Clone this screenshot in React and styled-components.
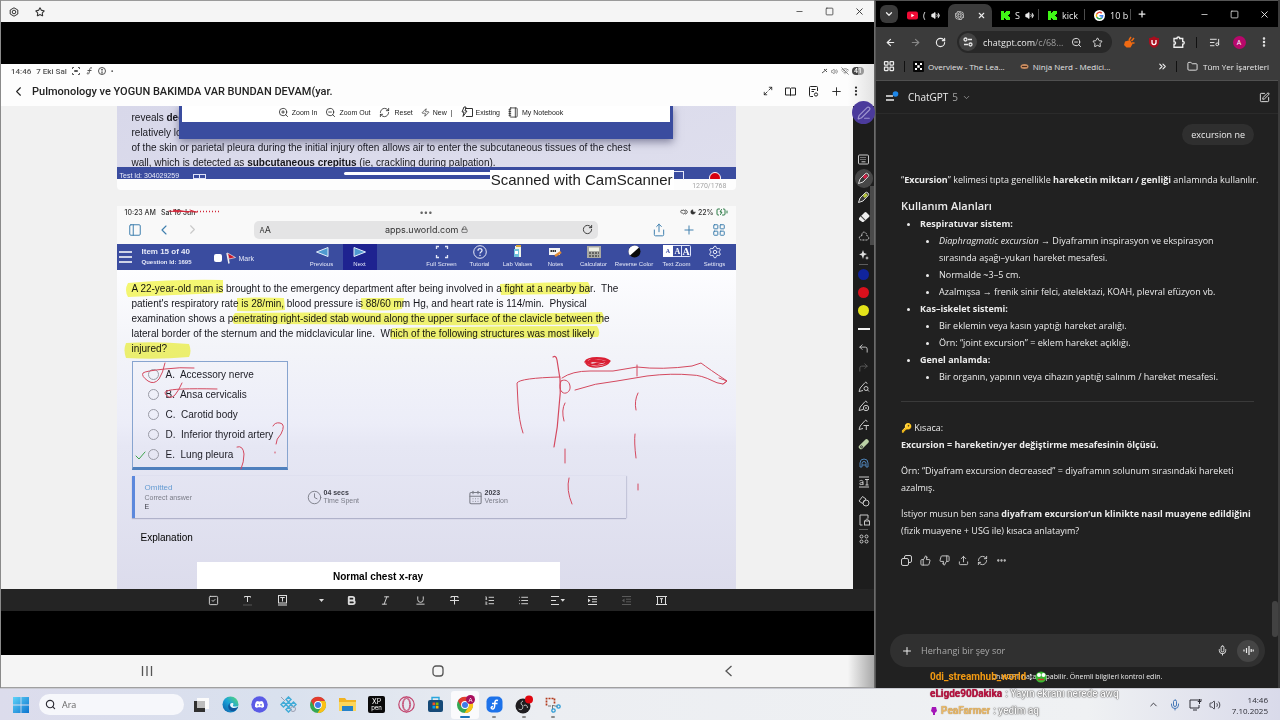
import React from 'react';
import styled, { createGlobalStyle, css } from 'styled-components';
import {
  ArrowLeft, ArrowRight, BatteryCharging, Bold, CalendarDays, ChevronDown, ChevronLeft, ChevronRight,
  ChevronUp, ChevronsRight, Clock, CornerUpLeft, CornerUpRight, Ellipsis, EllipsisVertical,
  Folder, Italic, LayoutGrid, List, ListMusic, ListOrdered, Lock, Maximize2, Mic, Minus, Moon,
  Notebook, PanelLeft, PenLine, Plus, RefreshCw, RotateCw, Search, Settings, Share, Square,
  SquareCheck, SquarePen, Star, ThumbsDown, ThumbsUp, Underline, Upload, Volume2, WifiOff, X, Zap,
  ZoomIn, ZoomOut
} from 'lucide-react';
import { FaDiscord } from 'react-icons/fa';
import { RiOpenaiFill } from 'react-icons/ri';

const GlobalStyle = createGlobalStyle`
  * { box-sizing: border-box; }
  body { margin: 0; background: #000; font-family: 'Liberation Sans', Arial, sans-serif; }
  button, input { font: inherit; color: inherit; border: 0; padding: 0; margin: 0; background: none; outline: 0; }
  h1, h2, p, ul { margin: 0; padding: 0; }
  svg { display: block; flex: none; }
`;

const Desktop = styled.div`
  height: 100vh;
  display: grid;
  grid-template-columns: minmax(0, 875fr) minmax(0, 405fr);
  grid-template-rows: minmax(0, 1fr) 32px;
  overflow: hidden;
`;

const IconButton = styled.button`
  display: flex;
  align-items: center;
  justify-content: center;
  flex: none;
  width: ${p => p.$w || 16}px;
  height: ${p => p.$h || 16}px;
  color: ${p => p.$color || 'inherit'};
  background: ${p => p.$bg || 'none'};
  border-radius: ${p => p.$radius || 0}px;
`;

const Spacer = styled.div`
  flex: 1;
`;

/* ---------- tablet mirror window ---------- */

const TabletWindow = styled.section`
  display: flex;
  flex-direction: column;
  min-height: 0;
  border-left: 1px solid #8a8a8a;
  border-right: 1px solid #6b6b6b;
  background: #000;
`;

const TitleBar = styled.header`
  height: 22px;
  flex: none;
  display: flex;
  align-items: center;
  gap: 10px;
  padding: 0 7px 0 5px;
  background: #f5f5f5;
  border-top: 1px solid #9a9a9a;
  color: #333;
`;

const WindowControls = styled.div`
  margin-left: auto;
  display: flex;
  gap: 14px;
`;

const BlackBand = styled.div`
  height: ${p => p.$h}px;
  flex: none;
  background: #000;
`;

const TabletStatus = styled.div`
  height: 14px;
  flex: none;
  display: flex;
  align-items: center;
  gap: 5px;
  padding: 0 10px;
  background: linear-gradient(90deg, #fdfdfd 97%, #e2e2e2);
  color: #555;
  font: 500 8px Roboto, sans-serif;
`;

const StatusIcons = styled.div`
  margin-left: auto;
  display: flex;
  align-items: center;
  gap: 3px;
`;

const BatteryPill = styled.span`
  padding: 0 2px;
  border-radius: 4px;
  background: linear-gradient(90deg, #444 50%, #999 50%);
  color: #fff;
  font-size: 7px;
  line-height: 8px;
`;

const DocHeader = styled.header`
  height: 28px;
  flex: none;
  display: flex;
  align-items: center;
  gap: 6px;
  padding: 0 12px 2px 9px;
  background: linear-gradient(90deg, #fdfdfd 97%, #e2e2e2);
  color: #222;
`;

const DocTitle = styled.h1`
  font: 500 11px Roboto, sans-serif;
  white-space: nowrap;
`;

const DocActions = styled.div`
  margin-left: auto;
  display: flex;
  gap: 6px;
`;

const DocBody = styled.div`
  flex: 1;
  min-height: 0;
  display: flex;
`;

const Pages = styled.main`
  flex: 1;
  min-width: 0;
  overflow: hidden;
  display: flex;
  flex-direction: column;
  align-items: center;
  gap: 16px;
  padding-right: 2px;
  background: #f1f1f1;
`;

const FirstPage = styled.article`
  position: relative;
  flex: none;
  width: 619px;
  max-width: 100%;
  height: 84px;
  overflow: hidden;
  background: #fdfdfd;
  border-radius: 0 0 4px 4px;
`;

const FirstPageText = styled.div`
  height: 61px;
  overflow: hidden;
  padding: 4px 15px 0;
  background: linear-gradient(160deg, #d8d8ea, #dedeed);
`;

const Line = styled.p`
  font-size: 10px;
  line-height: 15px;
  white-space: pre;
  color: #16161d;
`;

const Popup = styled.div`
  position: absolute;
  top: 0;
  left: 62px;
  right: 63px;
  height: 33px;
  border: 3px solid #3a4c9f;
  border-width: 0 3px 17px;
  background: #fff;
  box-shadow: 0 3px 8px rgba(40, 40, 80, 0.5);
  display: flex;
  align-items: center;
  justify-content: center;
  gap: 8px;
  padding: 0 10px 4px 0;
`;

const PopupButton = styled.button`
  display: flex;
  align-items: center;
  gap: 3px;
  font-size: 7px;
  color: #222;
  white-space: nowrap;
`;

const TestBar = styled.div`
  height: 12px;
  overflow: hidden;
  background: #3a4c9f;
  color: #e9ebf8;
  font-size: 7px;
  line-height: 18px;
  display: flex;
  gap: 14px;
  padding: 0 15px 0 3px;
`;

const TestChip = styled.span`
  width: 13px;
  height: 5px;
  margin-top: 7px;
  border: 1px solid #dfe3f7;
  background: linear-gradient(#dfe3f7, #dfe3f7) center / 1px 100% no-repeat;
`;

const TestProgress = styled.span`
  flex: 1;
  height: 3px;
  margin: 5px 28px 0 124px;
  background: #fff;
  border-radius: 2px;
`;

const RecordDot = styled.span`
  width: 12px;
  height: 12px;
  margin-top: 5px;
  border: 1px solid #fff;
  border-radius: 50%;
  background: #d8000f;
`;

const PageNumber = styled.div`
  height: 11px;
  padding-right: 9px;
  text-align: right;
  font: 7px/14px Roboto, sans-serif;
  color: #a5a5a5;
`;

const ScannerMark = styled.div`
  position: absolute;
  right: 62px;
  bottom: 0;
  height: 20px;
  padding: 0 1px;
  background: #fff;
  color: #222;
  font-size: 15px;
  line-height: 20px;
  white-space: nowrap;

  &::after {
    content: '';
    position: absolute;
    left: 100%;
    top: 1px;
    width: 9px;
    height: 8px;
    border: 1px solid #e6e9f8;
    border-width: 1px 1px 0 0;
  }
`;

const SecondPage = styled.article`
  position: relative;
  flex: none;
  width: 619px;
  max-width: 100%;
  min-height: 400px;
  background: linear-gradient(#fdfdff 64px, #f3f4f9 140px, #ecedf8 218px, #e6e7f4 240px, #dcdcec 383px);
`;

const markLayer = css`
  position: absolute;
  top: 0;
  left: 0;
  pointer-events: none;
`;

const MarkerLayer = styled.svg`
  ${markLayer}
  mix-blend-mode: multiply;
`;

const InkLayer = styled.svg`
  ${markLayer}
  fill: none;
  stroke: #d4495f;
  stroke-linecap: round;
  stroke-linejoin: round;
`;

const SafariStatus = styled.div`
  height: 11px;
  display: grid;
  grid-template-columns: 1fr auto 1fr;
  align-items: center;
  padding: 0 8px;
  background: #f9f9f9;
  color: #333;
  font: 500 7px Inter, sans-serif;
`;

const StatusGroup = styled.div`
  display: flex;
  align-items: center;
  justify-content: ${p => (p.$end ? 'flex-end' : 'flex-start')};
  gap: ${p => (p.$end ? 2 : 5)}px;
`;

const Dots = styled.span`
  color: #666;
  font-size: 8px;
`;

const SafariBar = styled.div`
  height: 27px;
  display: flex;
  align-items: center;
  padding: 0 9px 2px 10px;
  background: #f9f9f9;
  color: #3f7fae;
`;

const SafariNav = styled.div`
  display: flex;
  gap: 12px;
  width: 127px;
`;

const SafariActions = styled.div`
  display: flex;
  gap: 14px;
  margin-left: auto;
`;

const SafariAddress = styled.button`
  width: 344px;
  height: 18px;
  display: flex;
  align-items: center;
  justify-content: space-between;
  padding: 0 4px 0 6px;
  border-radius: 5px;
  background: #e4e4e5;
  color: #333;
  font: 9px Inter, sans-serif;
`;

const Host = styled.span`
  display: flex;
  align-items: center;
  gap: 3px;
`;

const QuizBar = styled.nav`
  height: 26px;
  display: flex;
  align-items: stretch;
  padding: 0 4px 0 2px;
  background: #3a4c9f;
  color: #e6e9f8;
`;

const QuizInfo = styled.div`
  width: 182px;
  display: flex;
  align-items: center;
`;

const ItemLabel = styled.div`
  width: 72px;
  margin-left: 9px;
  font-weight: 700;
  font-size: 8px;
  line-height: 11px;

  small {
    display: block;
    font-size: 6px;
  }
`;

const MarkLabel = styled.label`
  display: flex;
  align-items: center;
  gap: 2px;
  padding-top: 2px;
  font-size: 7px;

  input {
    appearance: none;
    width: 8px;
    height: 8px;
    margin-right: 1px;
    border-radius: 2px;
    background: #fff;
  }
`;

const QuizTool = styled.button`
  width: ${p => p.$w || 38}px;
  flex: none;
  display: flex;
  flex-direction: column;
  align-items: center;
  justify-content: space-between;
  padding: 1px 0 2px;
  font-size: 6px;
  line-height: 7px;
  white-space: nowrap;
  background: ${p => (p.$active ? '#1e2390' : 'none')};
`;

const QuizTools = styled.div`
  display: flex;
  margin-left: auto;
`;

const Question = styled.div`
  position: relative;
  padding: 11px 15px 5px;
`;

const Answers = styled.fieldset`
  width: 156px;
  margin: 0 0 6px 15px;
  padding: 2px 0 3px 15px;
  border: 1px solid #87a4cf;
  border-bottom: 3px solid #4f80bd;
`;

const Answer = styled.label`
  height: 20px;
  display: flex;
  align-items: center;
  font-size: 10px;
  color: #1c1c24;
  white-space: pre;

  input {
    appearance: none;
    width: 11px;
    height: 11px;
    margin-right: 7px;
    border: 1px solid #9a9ba6;
    border-radius: 50%;
  }
`;

const ResultCard = styled.div`
  width: 494px;
  height: 42px;
  margin-left: 15px;
  display: grid;
  grid-template-columns: 162px 161px 1fr;
  align-items: center;
  padding-left: 10px;
  border-left: 3px solid #5c88dc;
  box-shadow: 0 1px 1px rgba(110, 115, 150, 0.4), 1px 0 1px rgba(110, 115, 150, 0.2);
  color: #7b7d88;
  font-size: 7px;
  line-height: 9px;
`;

const ResultTitle = styled.div`
  color: #649bd2;
  font-size: 8px;
  line-height: 10px;
`;

const Strong = styled.div`
  color: #3c3d47;
  font-weight: ${p => (p.$plain ? 400 : 700)};
`;

const ResultItem = styled.div`
  display: flex;
  align-items: center;
  gap: 2px;
  line-height: 8px;
`;

const Explanation = styled.h2`
  margin: 12px 0 17px 24px;
  font-size: 10px;
  line-height: 15px;
  font-weight: 400;
`;

const Figure = styled.div`
  width: 363px;
  height: 60px;
  margin-left: 80px;
  padding-top: 7px;
  background: #fff;
  text-align: center;
  font-weight: 700;
  font-size: 10px;
  line-height: 15px;
`;

const ToolRail = styled.aside`
  position: relative;
  width: 21px;
  flex: none;
  display: flex;
  flex-direction: column;
  align-items: center;
  padding-top: 44px;
  background: #1d1d1d;
  color: #c9c9c9;
`;

const PenBadge = styled.button`
  position: absolute;
  top: -5px;
  left: -1px;
  width: 23px;
  height: 23px;
  display: flex;
  align-items: center;
  justify-content: center;
  border-radius: 50%;
  background: #4b3b9c;
  color: #9d94cf;
`;

const RailThumb = styled.div`
  position: absolute;
  top: 80px;
  right: 0;
  width: 4px;
  height: 59px;
  background: #4a4a4a;
`;

const RailRule = styled.div`
  width: 9px;
  height: 1px;
  flex: none;
  background: #5c5c5c;
`;

const Swatch = styled.span`
  width: 11px;
  height: 11px;
  border-radius: 50%;
  background: ${p => p.$color};
`;

const LineWeight = styled.span`
  width: 12px;
  height: 2px;
  background: #f2f2f2;
`;

const FormatBar = styled.div`
  height: 22px;
  flex: none;
  display: flex;
  justify-content: center;
  background: #242424;
  color: #dcdcdc;
`;

const FormatGroup = styled.div`
  width: 464px;
  display: flex;
  align-items: center;
  justify-content: space-between;
`;

const AndroidNav = styled.nav`
  height: 33px;
  flex: none;
  display: flex;
  align-items: center;
  justify-content: space-around;
  background: linear-gradient(90deg, #f5f5f5 97%, #a8a8a8);
  border-bottom: 1px solid #a0a0a0;
  color: #555;
`;

/* ---------- browser window ---------- */

const Browser = styled.section`
  position: relative;
  display: flex;
  flex-direction: column;
  min-height: 0;
  border-left: 1px solid #555;
  border-right: 2px solid #3b3b3b;
  background: #212121;
  color: #ececec;
  font-family: 'Open Sans', 'Noto Sans', sans-serif;
`;

const TabStrip = styled.div`
  height: 27px;
  flex: none;
  display: flex;
  align-items: center;
  padding: 0 6px 0 4px;
  border-top: 1px solid #555;
  background: #000;
  font-size: 9px;
`;

const Tab = styled.div`
  width: ${p => p.$w}px;
  height: 23px;
  align-self: flex-end;
  display: flex;
  align-items: center;
  justify-content: ${p => (p.$active ? 'space-between' : 'flex-start')};
  gap: 5px;
  padding: 0 ${p => (p.$active ? 6 : 3)}px 0 ${p => (p.$active ? 6 : 9)}px;
  border-radius: 7px 7px 0 0;
  overflow: hidden;
  white-space: nowrap;
  background: ${p => (p.$active ? '#3b3b3b' : 'none')};
`;

const TabDivider = styled.span`
  width: 1px;
  height: 11px;
  background: #4c4c4c;
`;

const AddressRow = styled.div`
  height: 30px;
  flex: none;
  display: flex;
  align-items: center;
  gap: 9px;
  padding: 0 6px;
  background: #3b3b3b;
`;

const Address = styled.button`
  width: 157px;
  height: 22px;
  display: flex;
  align-items: center;
  gap: 6px;
  padding: 0 9px 0 2px;
  border-radius: 11px;
  background: #282828;
  font-size: 9px;
  color: #e8e8e8;

  span { color: #9d9d9d; }
`;

const UrlText = styled.b`
  flex: 1;
  font-weight: 400;
  text-align: left;
  white-space: nowrap;
`;

const StarSlot = styled.i`
  margin-left: 4px;
`;

const Divider = styled.span`
  width: 1px;
  height: 11px;
  background: #111;
`;

const Avatar = styled.span`
  width: 13px;
  height: 13px;
  border-radius: 50%;
  background: #b8086b;
  color: #fff;
  font-size: 7px;
  line-height: 13px;
  text-align: center;
`;

const BookmarkRow = styled.nav`
  height: 24px;
  flex: none;
  display: flex;
  align-items: center;
  gap: 8px;
  padding: 0 9px 5px 6px;
  background: #3b3b3b;
  border-bottom: 1px solid #505050;
  font-size: 8px;
  white-space: nowrap;
`;

const Bookmark = styled.a`
  display: flex;
  align-items: center;
  gap: 4px;
  margin-right: 7px;
  color: #e3e3e3;
  text-decoration: none;
`;

const FolderButton = styled.button`
  display: flex;
  align-items: center;
  gap: 5px;
  margin-left: 2px;
`;

const ChatHeader = styled.header`
  height: 33px;
  flex: none;
  display: flex;
  align-items: center;
  gap: 8px;
  padding: 0 6px 0 7px;
  border-bottom: 1px solid #2b2b2b;
`;

const ModelButton = styled.button`
  display: flex;
  align-items: center;
  gap: 4px;
  font-size: 10px;

  span { color: #a3a3a3; }
`;

const Thread = styled.div`
  flex: 1;
  min-height: 0;
  overflow: hidden;
  padding: 10px 16px 0 25px;
  font-size: 9px;
  line-height: 17px;
`;

const UserBubble = styled.div`
  width: fit-content;
  margin: 0 8px 26px auto;
  padding: 2px 9px;
  border-radius: 11px;
  background: #2f2f2f;
`;

const Paragraph = styled.p`
  margin-bottom: ${p => p.$gap ?? 9}px;
`;

const ThreadHeading = styled.h2`
  font-size: 11px;
  font-weight: 600;
  line-height: 18px;
`;

const BulletList = styled.ul`
  padding: 0 10px 0 19px;
  list-style: disc;
`;

const ThreadRule = styled.hr`
  height: 1px;
  margin: 16px 8px 17px 0;
  border: 0;
  background: #3a3a3a;
`;

const ReplyActions = styled.div`
  display: flex;
  gap: 3px;
  margin-top: 13px;
  margin-left: -3px;
  color: #cfcfcf;
`;

const ScrollThumb = styled.div`
  position: absolute;
  right: 0;
  bottom: 51px;
  width: 6px;
  height: 36px;
  border-radius: 3px;
  background: #424242;
`;

const Composer = styled.form`
  height: 33px;
  flex: none;
  display: flex;
  align-items: center;
  gap: 7px;
  margin: 0 13px 0 14px;
  padding: 0 6px 0 9px;
  border-radius: 17px;
  background: #303030;

  input {
    flex: 1;
    min-width: 0;
    font-size: 9px;
  }

  input::placeholder { color: #a9a9a9; opacity: 1; }
`;

const Disclaimer = styled.p`
  height: 21px;
  flex: none;
  text-align: center;
  font-size: 7px;
  line-height: 20px;
`;

/* stream chat floats above the browser and the taskbar */
const StreamChat = styled.div`
  position: absolute;
  left: 54px;
  top: 668px;
  display: flex;
  flex-direction: column;
  font: 700 10px/17px Roboto, sans-serif;
  white-space: nowrap;
  z-index: 2;
`;

const StreamLine = styled.div`
  display: flex;
  align-items: center;
  gap: 3px;
  color: #f7f7f7;
  font-weight: 500;
  text-shadow: 0 0 1px #555, 0 0 1px #555, 0 0 2px #777;
`;

const StreamUser = styled.b`
  color: ${p => p.$color};
  text-shadow: ${p => (p.$outline ? `0 0 1px ${p.$outline}` : 'none')};
`;

/* ---------- taskbar ---------- */

const Taskbar = styled.footer`
  grid-column: 1 / -1;
  display: flex;
  align-items: center;
  padding: 0 12px;
  border-top: 1px solid #c9cad2;
  background: linear-gradient(90deg, #dcdcec, #d9e1ee 22%, #eceef2 42%, #eff1f3 85%, #d9daea);
  color: #2e2e36;
`;

const TaskSearch = styled.label`
  width: 145px;
  height: 21px;
  display: flex;
  align-items: center;
  gap: 6px;
  margin: 0 3px 0 9px;
  padding: 0 6px;
  border-radius: 11px;
  background: #f6f7fb;

  input {
    width: 100%;
    font: 9px 'Open Sans', sans-serif;
  }

  input::placeholder { color: #666; opacity: 1; }
`;

const TaskApps = styled.div`
  width: 380px;
  display: flex;
  justify-content: space-between;
`;

const TaskApp = styled.button`
  width: 28px;
  height: 28px;
  display: flex;
  align-items: center;
  justify-content: center;
  position: relative;
  border-radius: 3px;
  background: ${p => (p.$state === 'active' ? '#fafafc' : 'none')};

  &::after {
    content: '';
    display: ${p => (p.$state ? 'block' : 'none')};
    position: absolute;
    bottom: 1px;
    width: ${p => (p.$state === 'active' ? 10 : 4)}px;
    height: 2px;
    border-radius: 1px;
    background: ${p => (p.$state === 'active' ? '#1a73b8' : '#8b8b8b')};
  }
`;

const Tray = styled.div`
  margin-left: auto;
  display: flex;
  align-items: center;
  gap: 4px;
`;

const TrayClock = styled.time`
  margin-left: 6px;
  text-align: right;
  font: 8px/11px 'Open Sans', sans-serif;
`;

const Svg = ({ size = 16, box = 16, children, ...rest }) => (
  <svg width={size} height={size} viewBox={`0 0 ${box} ${box}`} fill="none" stroke="currentColor" aria-hidden="true" {...rest}>
    {children}
  </svg>
);

const HexGear = () => (
  <Svg size={10} box={10}>
    <path d="M5 .8 8.800 3v4L5 9.200 1.200 7V3Z" />
    <circle cx="5" cy="5" r="1.800" />
  </Svg>
);

const PenIcon = ({ color }) => (
  <Svg size={13} box={13} stroke="#ddd">
    <path d="M1.500 11.500 3 7l5-5a1.800 1.800 0 0 1 3 2.800L6 10Z" fill="#3a3a3a" />
    <path d="m6.800 6 3-2.900" stroke={color} strokeWidth="3" />
  </Svg>
);

const EraserIcon = () => (
  <Svg size={12} box={12} stroke="none">
    <path d="m1 7 5.500-5.500a1.500 1.500 0 0 1 2 0L11 4a1.400 1.400 0 0 1 0 2L6 10.500a1.800 1.800 0 0 1-2.400 0L1 8.800Z" fill="#eee" />
    <path d="m3.400 4.800 4 4-.8.7-4-4Z" fill="#444" />
  </Svg>
);

const PenWith = ({ children }) => (
  <Svg size={12} box={12}>
    <path d="M1 10.500 2.200 7 7 1.600a1.200 1.200 0 0 1 2 1.200M1 10.500 5 9.500" />
    {children}
  </Svg>
);

const TextGlyph = ({ boxed, under }) => (
  <Svg size={11} box={11}>
    {boxed && <rect x="1.500" y=".5" width="8" height="7.500" />}
    <path d={boxed ? 'M3.500 3V2.500h4V3M5.500 2.500v4' : 'M2.500 2.500v-1h6v1M5.500 1.500v5.500'} />
    {under && <path d="M1 10h9" stroke={under} />}
  </Svg>
);

const Kick = () => (
  <Svg size={9} box={9} stroke="none" fill="#3ff516">
    <path d="M0 0h3v2h1V1h1V0h4v3H8v1H7v1h1v1h1v3H5V8H4V7H3v2H0Z" />
  </Svg>
);

const YouTube = () => (
  <Svg size={11} box={11} stroke="none">
    <rect y="1.500" width="11" height="8" rx="2" fill="#ef0b35" />
    <path d="M4.300 3.700v3.600l3-1.800Z" fill="#fff" />
  </Svg>
);

const GoogleG = () => (
  <Svg size={11} box={22}>
    <circle cx="11" cy="11" r="11" fill="#fff" stroke="none" />
    <g strokeWidth="3">
      <path d="M15.500 6.500a6.300 6.300 0 0 0-10 1.500" stroke="#ea4335" />
      <path d="M5.500 8a6.300 6.300 0 0 0 0 6" stroke="#fbbc05" />
      <path d="M5.500 14a6.300 6.300 0 0 0 10 1.700" stroke="#34a853" />
      <path d="M15.500 15.700a6.300 6.300 0 0 0 1.800-4.200H11" stroke="#4285f4" />
    </g>
  </Svg>
);

const ExtensionPiece = () => (
  <Svg size={12} box={12} strokeWidth="1.400">
    <path d="M1 2.500h3c-.3-2 3-2 2.700 0h3v3c2-.3 2 3 0 2.700v3H1v-3c2 .3 2-2.800 0-2.500Z" />
  </Svg>
);

const Chrome = ({ badge }) => (
  <Svg size={20} box={20} stroke="none">
    <circle cx="10" cy="10" r="8" fill="#34a853" />
    <path d="M3 6a8 8 0 0 1 14 0h-7L6.500 12Z" fill="#e33b2e" />
    <path d="M17 6a8 8 0 0 1-7.500 12l4-6-1-6Z" fill="#fbc116" />
    <circle cx="10" cy="10" r="3.900" fill="#fff" />
    <circle cx="10" cy="10" r="3" fill="#3f7be8" />
    {badge && (
      <>
        <circle cx="15.500" cy="4.500" r="4.500" fill="#a80d5d" />
        <text x="15.500" y="6.800" textAnchor="middle" fontSize="6" fill="#fff" fontFamily="Liberation Sans">A</text>
      </>
    )}
  </Svg>
);

const Windows = () => (
  <Svg size={16} stroke="none">
    <defs>
      <linearGradient id="winblue" x1="0" y1="0" x2="1" y2="1">
        <stop stopColor="#5fd3f8" />
        <stop offset="1" stopColor="#0c74cf" />
      </linearGradient>
    </defs>
    <path d="M0 0h7.600v7.600H0ZM8.400 0H16v7.600H8.400ZM0 8.400h7.600V16H0ZM8.400 8.400H16V16H8.400Z" fill="url(#winblue)" />
  </Svg>
);

const TaskView = () => (
  <Svg size={16} stroke="none">
    <path d="M4 1h12v11H4Z" fill="#fbfbfb" />
    <path d="M1 4h11v11H1Z" fill="#303030" />
    <path d="M4 4h8v7H4Z" fill="#bdbdbd" />
  </Svg>
);

const Edge = () => (
  <Svg size={17} box={17} stroke="none">
    <defs>
      <linearGradient id="edge" x1="0" y1="1" x2="1" y2="0">
        <stop stopColor="#0c59a4" />
        <stop offset=".5" stopColor="#1ba3d8" />
        <stop offset="1" stopColor="#5fe06c" />
      </linearGradient>
    </defs>
    <circle cx="8.500" cy="8.500" r="8" fill="url(#edge)" />
    <path d="M10 6.500c-3 0-3.500 4 .5 5.200 2 .6 4.500-.2 5.600-1.200-.6 2-2 3.700-3.600 4.800C7 16 5 11 7 8c.6-.8 1.600-1.400 3-1.500Z" fill="#10559b" />
    <path d="M10 7c2 0 1.500 1.500 1 2.500s1.500 1.500 5 .5c-.5 1.500-3.500 2.400-5.500 1.700C7.500 10.700 7.500 7 10 7Z" fill="#eaf6fb" />
  </Svg>
);

const Discord = () => (
  <Svg size={17} box={17} stroke="none">
    <circle cx="8.500" cy="8.500" r="8.200" fill="#5a5be6" />
    <FaDiscord x="3.500" y="3.500" size={10} color="#fff" />
  </Svg>
);

const Diamonds = () => (
  <Svg size={17} box={17} strokeWidth="1.500">
    <path d="m8.500 1 2.500 2.500L8.500 6 6 3.500ZM3.500 6 6 8.500 3.500 11 1 8.500ZM8.500 6 11 8.500 8.500 11 6 8.500ZM8.500 11l2.500 2.500L8.500 16 6 13.500ZM13.500 6 16 8.500 13.500 11 11 8.500Z" stroke="#42acd8" />
    <circle cx="13" cy="13" r="2.500" stroke="#9b9fb2" strokeWidth="1" />
    <path d="m1 1 4 4" stroke="#9b9fb2" strokeWidth="1" />
  </Svg>
);

const Explorer = () => (
  <Svg size={17} box={17} stroke="none">
    <path d="M0 2h6l1.500 2H17v11H0Z" fill="#f1b322" />
    <path d="M0 6h17v9H0Z" fill="#fbd55a" />
    <path d="M3 10h11v5H3Z" fill="#2582c9" />
  </Svg>
);

const XpPen = () => (
  <Svg size={17} box={17} stroke="none">
    <rect width="17" height="17" rx="2" fill="#090909" />
    <text x="8.500" y="7.500" textAnchor="middle" fontSize="7" fill="#fff" fontFamily="Inter">XP</text>
    <text x="8.500" y="14" textAnchor="middle" fontSize="6" fill="#fff" fontFamily="Inter">pen</text>
  </Svg>
);

const OperaGx = () => (
  <Svg size={17} box={17} stroke="#c2446d">
    <circle cx="8.500" cy="8.500" r="7.700" strokeWidth="1.200" />
    <ellipse cx="8.500" cy="8.500" rx="3.300" ry="6" />
    <path d="M8.500 1C3 4 3 13 8.500 16M8.500 1C14 4 14 13 8.500 16" strokeWidth=".8" />
  </Svg>
);

const Store = () => (
  <Svg size={17} box={17} stroke="none">
    <path d="M5 4V1.500h7V4" stroke="#2aa7dd" strokeWidth="1.400" />
    <rect x="1" y="4" width="15" height="12" rx="2" fill="#164a78" />
    <path d="M5.500 6.500h2.700v2.700H5.500Z" fill="#f25022" />
    <path d="M8.800 6.500h2.700v2.700H8.800Z" fill="#7fba00" />
    <path d="M5.500 9.800h2.700v2.700H5.500Z" fill="#00a4ef" />
    <path d="M8.800 9.800h2.700v2.700H8.800Z" fill="#ffb900" />
  </Svg>
);

const FlexApp = () => (
  <Svg size={17} box={17}>
    <rect x=".5" y=".5" width="16" height="16" rx="5" fill="#1d72ea" stroke="none" />
    <path d="M12 4.500C8 3 9 8 8.500 11c-.3 2-1.800 2.500-3 1.500-1-1 .5-2 1.500-2M6 7.500h5.500" stroke="#fff" strokeWidth="1.500" />
  </Svg>
);

const Obs = () => (
  <Svg size={20} box={20} stroke="none">
    <circle cx="9" cy="11" r="7.500" fill="#1f1d20" />
    <path d="M9 10.500c-2.500-.5-2.500-3.500 0-4.500M9.500 11c2-2 4.300-.3 3.800 2M8.500 11.500c1 2.500-1.500 4-3.800 2.500" stroke="#d3d3d3" strokeWidth="1" />
    <circle cx="15" cy="4.500" r="4" fill="#e0060f" />
  </Svg>
);

const Snip = () => (
  <Svg size={16}>
    <path d="M1.500 8.500v-7h8v5" stroke="#b33a1d" strokeWidth="1.700" strokeDasharray="2 1" />
    <path d="M3 9h3M7.500 8v4M8 8.500l4.500 1" stroke="#777" />
    <circle cx="8.500" cy="13.500" r="1.700" stroke="#2e9cd6" strokeWidth="1.300" />
    <circle cx="13.500" cy="9.500" r="1.700" stroke="#2e9cd6" strokeWidth="1.300" />
  </Svg>
);

const taskApps = [
  { name: 'Task view', icon: TaskView },
  { name: 'Edge', icon: Edge },
  { name: 'Discord', icon: Discord },
  { name: 'Connect', icon: Diamonds },
  { name: 'Chrome', icon: Chrome },
  { name: 'Explorer', icon: Explorer },
  { name: 'XP Pen', icon: XpPen },
  { name: 'Opera GX', icon: OperaGx },
  { name: 'Store', icon: Store },
  { name: 'Chrome profile', icon: () => <Chrome badge />, state: 'active' },
  { name: 'Flow', icon: FlexApp, state: 'open' },
  { name: 'OBS', icon: Obs, state: 'open' },
  { name: 'Snipping tool', icon: Snip, state: 'open' },
];

const Triangle = ({ flip }) => (
  <Svg size={14} box={14} strokeWidth="1">
    <path d={flip ? 'M13 2.500 1.500 7 13 11.500Z' : 'M1 2.500 12.500 7 1 11.500Z'} fill="#4f9ad0" stroke="#e4eefa" />
  </Svg>
);

const LabVial = () => (
  <Svg size={13} box={13} stroke="none">
    <path d="M4 1h6v11H4Z" fill="#eef3e8" />
    <path d="M3 4h5v8H3Z" fill="#6fc2dc" />
    <path d="M5 0h5v2H5Z" fill="#d9a83a" />
    <path d="M4 6h3v3H4Z" fill="#fff" />
  </Svg>
);

const NotesPad = () => (
  <Svg size={15} box={15} stroke="none">
    <path d="M1 3h11v7H1Z" fill="#f4f4f4" />
    <path d="M2.500 6h6" stroke="#333" strokeWidth="2" strokeDasharray="1.500 .5" />
    <path d="m7 11 6-4" stroke="#e08b35" strokeWidth="2.500" />
  </Svg>
);

const CalcIcon = () => (
  <Svg size={14} box={14} stroke="none">
    <rect y="1" width="14" height="12" fill="#a9a9a3" />
    <path d="M2 2.500h10v3.500H2Z" fill="#eef0e4" />
    <path d="M2 8h10M2 11h10" stroke="#4c4c4c" strokeWidth="1.500" strokeDasharray="2 1" />
  </Svg>
);

const ReverseColor = () => (
  <Svg size={13} box={13} stroke="none">
    <circle cx="6.500" cy="6.500" r="6" fill="#0a0a0a" />
    <path d="M11 2.500A6 6 0 1 0 2 10.500Z" fill="#fff" />
  </Svg>
);

const TextZoomIcon = () => (
  <Svg width={28} height={12} viewBox="0 0 28 12" stroke="none" fontFamily="Liberation Serif" fontWeight="700" textAnchor="middle">
    <rect x=".5" y=".5" width="27" height="11" rx="1" stroke="#dfe4fa" />
    <path d="M0 0h10v12H0Z" fill="#fff" />
    <path d="M18.500 0v12" stroke="#dfe4fa" />
    <text x="5" y="8" fontSize="6" fill="#3a4c9f">A</text>
    <text x="14.500" y="9" fontSize="8" fill="#fff">A</text>
    <text x="23" y="10" fontSize="10" fill="#fff">A</text>
  </Svg>
);

const quizTools = [
  { label: 'Full Screen', icon: <Svg size={14} box={14} strokeWidth="1.300"><path d="M1.500 4V1.500H4M10 1.500h2.500V4M12.500 10v2.500H10M4 12.500H1.500V10" /></Svg> },
  { label: 'Tutorial', icon: <Svg size={14} box={14}><circle cx="7" cy="7" r="6.300" /><path d="M5 5.700c0-2.700 4-2.700 4-.2C9 7 7 7 7 8.500M7 9.700v1.300" strokeWidth="1.300" /></Svg> },
  { label: 'Lab Values', icon: <LabVial /> },
  { label: 'Notes', icon: <NotesPad /> },
  { label: 'Calculator', icon: <CalcIcon /> },
  { label: 'Reverse Color', icon: <ReverseColor />, w: 43 },
  { label: 'Text Zoom', icon: <TextZoomIcon />, w: 42 },
  { label: 'Settings', icon: <Settings size={14} strokeWidth={1.700} />, w: 34 },
];

const answers = ['A.  Accessory nerve', 'B.  Ansa cervicalis', 'C.  Carotid body', 'D.  Inferior thyroid artery', 'E.  Lung pleura'];

const railTools = [
  { name: 'Keyboard', icon: <Svg size={11} box={11}><rect x=".5" y="1" width="10" height="9" rx="1" /><path d="M2.500 3.500h6M2.500 5.500h6" strokeDasharray="1 1" /><path d="M3.500 7.800h4" /></Svg> },
  { name: 'Pen', icon: <PenIcon color="#d01f45" />, bg: '#474747' },
  { name: 'Highlighter', icon: <PenIcon color="#b7c840" /> },
  { name: 'Eraser', icon: <EraserIcon /> },
  { name: 'Lasso', icon: <Svg size={12} box={12} strokeDasharray="2 1"><path d="M4 5.500C3 1 9 1 8.500 5.500c3 .5 3 4.500 0 4.500h-5C.5 10 .5 6 4 5.500Z" /></Svg> },
  { name: 'Magic', icon: <Svg size={12} box={12} fill="#ddd" stroke="none"><path d="m5 1 1 3 3 1-3 1.500L5 10 3.800 6.500 1 5.500l2.800-1.300ZM9 7l.6 1.400L11 9l-1.400.6L9 11l-.6-1.400L7 9l1.400-.6ZM9.500 1v2.500" /></Svg> },
];

const railMore = [
  { name: 'Undo', icon: <CornerUpLeft size={11} /> },
  { name: 'Redo', icon: <CornerUpRight size={11} color="#5b5b5b" /> },
  { name: 'Pen search', icon: <PenWith><circle cx="8" cy="7.500" r="2" /><path d="m9.500 9 1.500 1.500" /></PenWith> },
  { name: 'Pen settings', icon: <PenWith><circle cx="8" cy="8" r="2.700" /><circle cx="8" cy="8" r=".5" /></PenWith> },
  { name: 'Pen to text', icon: <PenWith><path d="M5.500 6.500h5.500M8.300 6.500V11" /></PenWith> },
  { name: 'Tape', icon: <Svg size={12} box={12}><path d="m3 9 5.500-5.500" stroke="#bcd2a6" strokeWidth="4.500" strokeLinecap="round" /><circle cx="3.500" cy="8.800" r="1" stroke="#333" /></Svg> },
  { name: 'Assist', icon: <Svg size={12} box={12} stroke="#4e83b8"><path d="M2 10V6a4 4 0 0 1 8 0v4H8V6.500a2 2 0 0 0-4 0V10ZM4 8h4" /></Svg> },
  { name: 'Text box', icon: <Svg size={12} box={12}><path d="M1 1h10M1 11h10M7 3.500h4M9 3.500V9M7.500 9h3M1.500 5c3-1.500 3.500 0 3.500 1.500V9M5 6.500C0 6.500 1 10 5 8" /></Svg> },
  { name: 'Shapes', icon: <Svg size={12} box={12}><path d="M1 6 4.500 1.500 8 4 4.500 8.500Z" /><circle cx="8" cy="8" r="3" /></Svg> },
  { name: 'Page lock', icon: <Svg size={12} box={12}><path d="M4.500 11H2V1h8v3.500" /><rect x="6.500" y="7" width="5" height="4" /><path d="M7.500 7c0-2.500 3-2.500 3 0" /></Svg> },
];

const formatTools = [
  { name: 'Task', icon: <SquareCheck size={11} /> },
  { name: 'Text colour', icon: <TextGlyph under="#555" /> },
  { name: 'Text fill', icon: <TextGlyph boxed under="currentColor" /> },
  { name: 'Size', icon: <Svg size={14} box={14}><path d="M9 6h5l-2.500 3Z" fill="currentColor" stroke="none" /></Svg> },
  { name: 'Bold', icon: <Bold size={11} strokeWidth={4} /> },
  { name: 'Italic', icon: <Italic size={11} /> },
  { name: 'Underline', icon: <Underline size={11} /> },
  { name: 'Strike', icon: <Svg size={11} box={11}><path d="M2 3V1.500h7V3M5.500 1.500V9.500M1 5.500h9" /></Svg> },
  { name: 'Numbered list', icon: <ListOrdered size={11} /> },
  { name: 'Bulleted list', icon: <List size={11} /> },
  { name: 'Align', icon: <Svg width={14} height={11} viewBox="0 0 14 11"><path d="M0 1.500h8M0 5.500h5M0 9.500h8" /><path d="M9.500 4h4.500l-2.200 2.800Z" fill="currentColor" stroke="none" /></Svg> },
  { name: 'Indent', icon: <Svg size={11} box={11}><path d="M1 1.500h9M5 4.200h5M5 6.800h5M1 9.500h9" /><path d="M1 3.500v4L3.500 5.500Z" fill="currentColor" stroke="none" /></Svg> },
  { name: 'Outdent', icon: <Svg size={11} box={11} color="#5a5a5a"><path d="M1 1.500h9M5 4.200h5M5 6.800h5M1 9.500h9" /><path d="M3.500 3.500v4L1 5.500Z" fill="currentColor" stroke="none" /></Svg> },
  { name: 'Text frame', icon: <Svg size={11} box={11}><rect x="1.500" y="1.500" width="8" height="8" /><path d="M4 3.700h3M5.500 3.700V8M0 1.500h2M9 1.500h2M0 9.500h2M9 9.500h2" /></Svg> },
];

function Highlights() {
  return (
    <MarkerLayer width="619" height="383" viewBox="117 206 619 383" fill="#f8fa72" aria-hidden="true">
      <path d="M128 283q50-4 95-3v13q-50 2-95 4-4-7 0-14Z" />
      <path d="M500 284q45-2 88-2 4 6 1 12-45 0-88 1Z" />
      <path d="M237 298q25-1 47 0l1 12q-24 2-48 1Z" />
      <path d="M361 298h43l-2 11q-20 3-41 0Z" />
      <path d="M235 313q60-1 180 0t187-1q4 7-1 12-90 2-180 1t-187-1q-4-5 1-11Z" />
      <path d="M392 328q100-2 205-2 4 6 1 11-100 2-207 2-2-6 1-11Z" />
      <path d="M126 343q30-2 63 1 3 7 0 13-32 3-63 1-3-8 0-15Z" />
    </MarkerLayer>
  );
}

function Ink() {
  return (
    <InkLayer width="619" height="383" viewBox="117 206 619 383" aria-hidden="true">
      <path d="M553 357q3-2 4 3l3 19q1 14-1 28-1 20-5 40" strokeWidth="1.200" />
      <path d="M560 377q-40 1-43 6l1 20q1 18 5 30" />
      <path d="M561 381c3-2 8-1 9 5s-5 9-8 6-2-8-1-11M562 378q10-7 28-7h23l24-4q25 3 55-1l9-3q8 6 26 18l-4 3q-7-1-10-3-12-6-21-6-20-2-45 1l-30 5q-22 2-42 9" />
      <path d="m719 378 8 3-4 3M637 365v11M565 403q-4 7-1 18M565 449v14M569 478q-3 12 3 26M638 393q-4 8-2 17M635 434q-1 8 1 24M638 484v6" />
      <path d="M585 362c3-6 20-5 25-1-4 7-20 8-24 2 6-5 15-5 23-2-6 5-15 5-21 2 6-3 12-3 19-1m-20 0c6-2 12-2 20 0m-17 3c5-1 9-2 14-3m-18-1 15 1" stroke="#da1f34" strokeWidth="1.500" />
      <path d="M165 363q-2 10-6 16-5 6-11 2-7-5-5-8 2-2 22-4 15-2 29-1M182 383q-3 7-7 12-4 4-8 1-4-4 0-5 6-3 50-2" />
      <path d="M273 426q2-4 7-3 6 1 1 11-5 5-5 10M275 452v1M237 447q6-2 7 7 0 8-3 15" />
      <path d="m136 456 3 3 6-7" stroke="#3da24b" />
      <path d="m169 211 10 1-6-2 16 2-12-1 20 1M190 210l6 2" stroke="#d3283a" />
      <path d="M197 211.500h22" stroke="#d3283a" strokeWidth="1.500" strokeDasharray="1 2" strokeLinecap="butt" />
    </InkLayer>
  );
}

function TabletMirror() {
  return (
    <TabletWindow>
      <TitleBar>
        <IconButton aria-label="Settings"><HexGear /></IconButton>
        <IconButton aria-label="Favourite"><Star size={10} strokeWidth={2.500} /></IconButton>
        <WindowControls>
          <IconButton aria-label="Minimize"><Minus size={9} /></IconButton>
          <IconButton aria-label="Maximize"><Square size={9} /></IconButton>
          <IconButton aria-label="Close"><X size={11} /></IconButton>
        </WindowControls>
      </TitleBar>
      <BlackBand $h={42} />
      <TabletStatus>
        <span>14:46</span>
        <span>7 Eki Sal</span>
        <Svg size={8} box={8}><path d="M.5 2V.5H2M6 .5h1.500V2M7.500 6v1.500H6M2 7.500H.5V6M2.500 3.500h3v1h-3Z" /></Svg>
        <Svg size={8} box={8}><path d="M7 1C4 0 5 3 4 6 3.500 8 1.500 7 2.500 5.500M2.500 3.500h4" /></Svg>
        <Svg size={8} box={8}><circle cx="4" cy="4" r="3.500" /><path d="M3 2.500h2M4 2.500v3.500M3 6h2" strokeWidth=".8" /></Svg>
        <span>•</span>
        <StatusIcons>
          <Svg size={6} box={6}><path d="m0 5 5-4M2 1l3 3" /></Svg>
          <Volume2 size={7} />
          <WifiOff size={8} />
          <BatteryPill>41</BatteryPill>
        </StatusIcons>
      </TabletStatus>
      <DocHeader>
        <IconButton aria-label="Back"><ChevronLeft size={15} strokeWidth={1.700} /></IconButton>
        <DocTitle>Pulmonology ve YOGUN BAKIMDA VAR BUNDAN DEVAM(yar.</DocTitle>
        <DocActions>
          <IconButton aria-label="Expand"><Maximize2 size={10} /></IconButton>
          <IconButton aria-label="Reading view"><Svg size={11} box={11}><path d="M.5 2h4l1 .8 1-.8h4v7h-4l-1 .6-1-.6h-4ZM5.500 2.500v7" /></Svg></IconButton>
          <IconButton aria-label="Page list" $w={18}><Svg size={11} box={11}><path d="M5 10.500H2.500a1 1 0 0 1-1-1v-8a1 1 0 0 1 1-1h6a1 1 0 0 1 1 1V5M3.500 3.500h4M3.500 5.500H6" /><circle cx="8" cy="8.500" r="1.600" /></Svg></IconButton>
          <IconButton aria-label="Add"><Plus size={13} strokeWidth={1.700} /></IconButton>
          <IconButton aria-label="More" $w={12}><EllipsisVertical size={12} strokeWidth={2.500} /></IconButton>
        </DocActions>
      </DocHeader>
      <DocBody>
        <Pages>
          <FirstPage>
            <FirstPageText>
              <Line>reveals <b>decreased</b></Line>
              <Line>relatively low</Line>
              <Line>of the skin or parietal pleura during the initial injury often allows air to enter the subcutaneous tissues of the chest</Line>
              <Line>wall, which is detected as <b>subcutaneous crepitus</b> (ie, crackling during palpation).</Line>
            </FirstPageText>
            <TestBar>
              <span>Test Id: 304029259</span>
              <TestChip />
              <TestProgress />
              <RecordDot />
            </TestBar>
            <PageNumber>1270/1768</PageNumber>
            <Popup>
              <PopupButton><ZoomIn size={11} strokeWidth={1.700} />Zoom In</PopupButton>
              <PopupButton><ZoomOut size={11} strokeWidth={1.700} />Zoom Out</PopupButton>
              <PopupButton><RefreshCw size={11} strokeWidth={1.700} />&nbsp;Reset</PopupButton>
              <PopupButton><Zap size={9} strokeWidth={1.700} />New&nbsp;&nbsp;|</PopupButton>
              <PopupButton><Svg size={12} box={12} stroke="#333"><path d="M4 2.500h7.500v8H5M3 1 1 6h2l-1 4.500L6 5H4l1-4Z" /></Svg>Existing</PopupButton>
              <PopupButton><Notebook size={11} strokeWidth={1.700} />My Notebook</PopupButton>
            </Popup>
            <ScannerMark>Scanned with CamScanner</ScannerMark>
          </FirstPage>

          <SecondPage>
            <SafariStatus>
              <StatusGroup>
                <span>10:23 AM</span>
                <span>Sat 10 Jun</span>
              </StatusGroup>
              <Dots>•••</Dots>
              <StatusGroup $end>
                <Svg width={8} height={6} viewBox="0 0 8 6"><path d="M3 1.500C0 0 0 5 3 4M3 1c3 0 3 4 0 4M5 1c3 0 3 4 0 4" strokeWidth=".8" /></Svg>
                <Moon size={6} fill="currentColor" />
                <span>22%</span>
                <BatteryCharging size={12} color="#2a7a45" />
              </StatusGroup>
            </SafariStatus>
            <SafariBar>
              <SafariNav>
                <IconButton aria-label="Sidebar"><PanelLeft size={14} strokeWidth={1.700} /></IconButton>
                <IconButton $w={18} aria-label="Back"><ChevronLeft size={16} strokeWidth={1.700} /></IconButton>
                <IconButton $color="#c9c9c9" aria-label="Forward"><ChevronRight size={15} strokeWidth={1.700} /></IconButton>
              </SafariNav>
              <SafariAddress>
                <span><small>A</small>A</span>
                <Host>apps.uworld.com <Lock size={7} /></Host>
                <RotateCw size={11} />
              </SafariAddress>
              <SafariActions>
                <IconButton aria-label="Share"><Share size={14} strokeWidth={1.700} /></IconButton>
                <IconButton aria-label="New tab"><Plus size={14} strokeWidth={1.700} /></IconButton>
                <IconButton aria-label="Tabs"><LayoutGrid size={14} strokeWidth={1.700} /></IconButton>
              </SafariActions>
            </SafariBar>
            <QuizBar>
              <QuizInfo>
                <IconButton aria-label="Menu" $w={14} $h={20}><Svg size={14} box={14} stroke="#fff" strokeWidth="1.500"><path d="M0 2h13M0 7h13M0 12h13" /></Svg></IconButton>
                <ItemLabel>Item 15 of 40<small>Question Id: 1695</small></ItemLabel>
                <MarkLabel>
                  <input type="checkbox" />
                  <Svg size={12} box={12}><path d="M2 1 4 11.500" stroke="#eee" strokeWidth="1.500" /><path d="m2.500 1 8 4.500L4 7Z" fill="#c81429" stroke="#eee" strokeWidth=".7" /></Svg>
                  Mark
                </MarkLabel>
              </QuizInfo>
              <QuizTool $w={42}><Triangle flip />Previous</QuizTool>
              <QuizTool $w={34} $active><Triangle />Next</QuizTool>
              <QuizTools>
                {quizTools.map(tool => (
                  <QuizTool key={tool.label} $w={tool.w}>{tool.icon}{tool.label}</QuizTool>
                ))}
              </QuizTools>
            </QuizBar>
            <Question>
              <Line>A 22-year-old man is brought to the emergency department after being involved in a fight at a nearby bar.  The</Line>
              <Line>patient's respiratory rate is 28/min, blood pressure is 88/60 mm Hg, and heart rate is 114/min.  Physical</Line>
              <Line>examination shows a penetrating right-sided stab wound along the upper surface of the clavicle between the</Line>
              <Line>lateral border of the sternum and the midclavicular line.  Which of the following structures was most likely</Line>
              <Line>injured?</Line>
            </Question>
            <Answers>
              {answers.map(answer => (
                <Answer key={answer}><input type="radio" name="answer" />{answer}</Answer>
              ))}
            </Answers>
            <ResultCard>
              <div>
                <ResultTitle>Omitted</ResultTitle>
                <div>Correct answer</div>
                <Strong $plain>E</Strong>
              </div>
              <ResultItem>
                <Clock size={15} strokeWidth={1.500} />
                <div><Strong>04 secs</Strong>Time Spent</div>
              </ResultItem>
              <ResultItem>
                <CalendarDays size={15} strokeWidth={1.700} />
                <div><Strong>2023</Strong>Version</div>
              </ResultItem>
            </ResultCard>
            <Explanation>Explanation</Explanation>
            <Figure>Normal chest x-ray</Figure>
            <Highlights />
            <Ink />
          </SecondPage>
        </Pages>
        <ToolRail>
          <PenBadge aria-label="Pen mode"><PenLine size={14} /></PenBadge>
          <RailThumb />
          {railTools.map(tool => (
            <IconButton key={tool.name} aria-label={tool.name} $w={18} $h={19} $radius={10} $bg={tool.bg}>{tool.icon}</IconButton>
          ))}
          <RailRule />
          {['#10249c', '#d9101c', '#e3e319'].map(color => (
            <IconButton key={color} aria-label={color} $h={18}><Swatch $color={color} /></IconButton>
          ))}
          <IconButton aria-label="Line weight" $h={20}><LineWeight /></IconButton>
          {railMore.map(tool => (
            <IconButton key={tool.name} aria-label={tool.name} $h={19}>{tool.icon}</IconButton>
          ))}
          <RailRule />
          <IconButton aria-label="All tools" $h={18}>
            <Svg size={10} box={10}><circle cx="2.500" cy="2.500" r="1.500" /><circle cx="7.500" cy="2.500" r="1.500" /><circle cx="2.500" cy="7.500" r="1.500" /><circle cx="7.500" cy="7.500" r="1.500" /></Svg>
          </IconButton>
        </ToolRail>
      </DocBody>
      <FormatBar>
        <FormatGroup>
          {formatTools.map(tool => (
            <IconButton key={tool.name} aria-label={tool.name}>{tool.icon}</IconButton>
          ))}
        </FormatGroup>
      </FormatBar>
      <BlackBand $h={44} />
      <AndroidNav>
        <IconButton aria-label="Recents"><Svg size={12} box={12} strokeWidth="1.300"><path d="M1.500 1v10M6 1v10M10.500 1v10" /></Svg></IconButton>
        <IconButton aria-label="Home"><Svg size={12} box={12} strokeWidth="1.300"><rect x="1" y="1" width="10" height="10" rx="3" /></Svg></IconButton>
        <IconButton aria-label="Back"><Svg size={12} box={12} strokeWidth="1.300"><path d="M8.500 1 3 6l5.500 5" /></Svg></IconButton>
      </AndroidNav>
    </TabletWindow>
  );
}

function ChatBrowser() {
  return (
    <Browser>
      <TabStrip>
        <IconButton aria-label="Search tabs" $w={18} $h={18} $bg="#3b3b3b" $radius={6}><ChevronDown size={10} strokeWidth={3} /></IconButton>
        <Tab $w={50}><YouTube />( <Volume2 size={9} fill="currentColor" /></Tab>
        <Tab $w={44} $active><RiOpenaiFill size={11} /><X size={9} strokeWidth={3} /></Tab>
        <Tab $w={46}><Kick />S<Volume2 size={9} fill="currentColor" /></Tab>
        <TabDivider />
        <Tab $w={45}><Kick />kick</Tab>
        <TabDivider />
        <Tab $w={45}><GoogleG />10 b</Tab>
        <TabDivider />
        <IconButton aria-label="New tab" $w={22}><Plus size={10} strokeWidth={3} /></IconButton>
        <WindowControls>
          <IconButton aria-label="Minimize"><Minus size={9} /></IconButton>
          <IconButton aria-label="Maximize"><Square size={9} /></IconButton>
          <IconButton aria-label="Close"><X size={11} /></IconButton>
        </WindowControls>
      </TabStrip>
      <AddressRow>
        <IconButton aria-label="Back"><ArrowLeft size={11} strokeWidth={2.500} /></IconButton>
        <IconButton aria-label="Forward" $color="#888"><ArrowRight size={11} strokeWidth={2.500} /></IconButton>
        <IconButton aria-label="Reload"><RotateCw size={11} strokeWidth={2.500} /></IconButton>
        <Address>
          <Svg size={18} box={18} strokeWidth="1.300"><circle cx="9" cy="9" r="9" fill="#424242" stroke="none" /><circle cx="6.500" cy="6.500" r="1.500" /><circle cx="11.500" cy="11.500" r="1.500" /><path d="M9 6.500h4M5 11.500h4" /></Svg>
          <UrlText>chatgpt.com<span>/c/68...</span></UrlText>
          <ZoomOut size={11} />
          <StarSlot><Star size={11} /></StarSlot>
        </Address>
        <IconButton aria-label="Extension"><Svg size={12} box={12} stroke="none"><path d="M2 5.500 7 4l2.500 4-2 3.500H3.500L1 9Z" fill="#f06a12" /><path d="M6 4 8 1M8.500 5 11 2M9 7h2.500" stroke="#f06a12" strokeWidth="1.500" /></Svg></IconButton>
        <IconButton aria-label="uBlock"><Svg size={12} box={12}><path d="M6 .3C8 2 10 2 11 2v4c0 3-2 5-5 6-3-1-5-3-5-6V2c1 0 3 0 5-1.700Z" fill="#a80d1d" stroke="none" /><path d="M4 4v2.500C4 9.300 8 9.300 8 6.500V4" stroke="#fff" strokeWidth="1.300" /></Svg></IconButton>
        <IconButton aria-label="Extensions"><ExtensionPiece /></IconButton>
        <Divider />
        <IconButton aria-label="Media"><ListMusic size={11} /></IconButton>
        <IconButton aria-label="Profile"><Avatar>A</Avatar></IconButton>
        <IconButton aria-label="Menu"><EllipsisVertical size={12} strokeWidth={3} /></IconButton>
      </AddressRow>
      <BookmarkRow>
        <IconButton aria-label="Apps" $w={14}><LayoutGrid size={12} strokeWidth={2.500} /></IconButton>
        <Divider />
        <Bookmark href="#overview">
          <Svg size={11} box={11} stroke="none"><rect width="11" height="11" rx="1" fill="#060606" /><path d="M2 2h2v2H2ZM7 2h2v2H7ZM4.300 4.300h2.400v2.400H4.300ZM2 7h2v2H2ZM7 7h2v2H7Z" fill="#fff" /></Svg>
          Overview - The Lea...
        </Bookmark>
        <Bookmark href="#ninja">
          <Svg size={9} box={9} stroke="none"><ellipse cx="4.500" cy="4.500" rx="4" ry="2.500" fill="#c58a5e" /><path d="M2 4.500h5" stroke="#4a2d20" /></Svg>
          Ninja Nerd - Medici...
        </Bookmark>
        <Spacer />
        <ChevronsRight size={11} strokeWidth={2.500} />
        <Divider />
        <FolderButton><Folder size={11} />Tüm Yer İşaretleri</FolderButton>
      </BookmarkRow>
      <ChatHeader>
        <IconButton aria-label="Sidebar" $w={17}><Svg size={14} box={14}><path d="M1 6h7M1 10h8" strokeWidth="1.300" /><circle cx="10.500" cy="4" r="2.800" fill="#1d86e8" stroke="none" /></Svg></IconButton>
        <ModelButton>ChatGPT <span>5</span><ChevronDown size={9} color="#a3a3a3" /></ModelButton>
        <Spacer />
        <IconButton aria-label="New chat"><SquarePen size={11} /></IconButton>
      </ChatHeader>
      <Thread>
        <UserBubble>excursion ne</UserBubble>
        <Paragraph>“<b>Excursion</b>” kelimesi tıpta genellikle <b>hareketin miktarı / genliği</b> anlamında kullanılır.</Paragraph>
        <ThreadHeading>Kullanım Alanları</ThreadHeading>
        <BulletList>
          <li><b>Respiratuvar sistem:</b>
            <BulletList>
              <li><i>Diaphragmatic excursion</i> → Diyaframın inspirasyon ve ekspirasyon sırasında aşağı–yukarı hareket mesafesi.</li>
              <li>Normalde ~3–5 cm.</li>
              <li>Azalmışsa → frenik sinir felci, atelektazi, KOAH, plevral efüzyon vb.</li>
            </BulletList>
          </li>
          <li><b>Kas–iskelet sistemi:</b>
            <BulletList>
              <li>Bir eklemin veya kasın yaptığı hareket aralığı.</li>
              <li>Örn: “joint excursion” = eklem hareket açıklığı.</li>
            </BulletList>
          </li>
          <li><b>Genel anlamda:</b>
            <BulletList>
              <li>Bir organın, yapının veya cihazın yaptığı salınım / hareket mesafesi.</li>
            </BulletList>
          </li>
        </BulletList>
        <ThreadRule />
        <Paragraph $gap={0}>🔑 Kısaca:</Paragraph>
        <Paragraph><b>Excursion = hareketin/yer değiştirme mesafesinin ölçüsü.</b></Paragraph>
        <Paragraph>Örn: “Diyafram excursion decreased” = diyaframın solunum sırasındaki hareketi azalmış.</Paragraph>
        <Paragraph>İstiyor musun ben sana <b>diyafram excursion’un klinikte nasıl muayene edildiğini</b> (fizik muayene + USG ile) kısaca anlatayım?</Paragraph>
        <ReplyActions>
          <IconButton aria-label="Copy"><Svg size={11} box={11}><rect x=".5" y="3.500" width="7" height="7" rx="1.500" /><path d="M3.500 3V2A1.500 1.500 0 0 1 5 .5h4A1.500 1.500 0 0 1 10.500 2v4A1.500 1.500 0 0 1 9 7.500H8" /></Svg></IconButton>
          <IconButton aria-label="Good"><ThumbsUp size={11} /></IconButton>
          <IconButton aria-label="Bad"><ThumbsDown size={11} /></IconButton>
          <IconButton aria-label="Share"><Upload size={11} /></IconButton>
          <IconButton aria-label="Retry"><RefreshCw size={11} /></IconButton>
          <IconButton aria-label="More"><Ellipsis size={11} strokeWidth={3} /></IconButton>
        </ReplyActions>
      </Thread>
      <ScrollThumb />
      <Composer>
        <IconButton type="button" aria-label="Attach" $w={15}><Plus size={12} /></IconButton>
        <input aria-label="Mesaj" placeholder="Herhangi bir şey sor" />
        <IconButton type="button" aria-label="Dictate"><Mic size={11} /></IconButton>
        <IconButton type="button" aria-label="Voice" $w={22} $h={22} $radius={11} $bg="#454545">
          <Svg size={11} box={11} strokeWidth="1.200"><path d="M1 4.500v2M3.500 3v5M6 1v9M8.200 4v3M10.200 4.500v2" /></Svg>
        </IconButton>
      </Composer>
      <Disclaimer>ChatGPT hata yapabilir. Önemli bilgileri kontrol edin.</Disclaimer>
      <StreamChat>
        <StreamLine>
          <StreamUser $color="#f39a12">0di_streamhub_world</StreamUser>:
          <Svg size={12} box={12} stroke="none"><circle cx="6" cy="6" r="5.500" fill="#38b931" /><circle cx="4" cy="4" r="2" fill="#fff" /><circle cx="8.500" cy="4" r="2" fill="#fff" /><path d="M3 8.500h6" stroke="#c43a2b" strokeWidth="1.500" /></Svg>
        </StreamLine>
        <StreamLine>
          <StreamUser $color="#b8123f" $outline="#700024">eLigde90Dakika</StreamUser>: Yayın ekranı nerede awq
        </StreamLine>
        <StreamLine>
          <Svg size={8} box={8} stroke="none"><path d="M2 0h4l1 4-2 2v2H3V6L1 4Z" fill="#a316b8" /></Svg>
          <StreamUser $color="#e8b869" $outline="#8a6325">PeaFarmer</StreamUser>: yedim aq
        </StreamLine>
      </StreamChat>
    </Browser>
  );
}

function App() {
  return (
    <>
      <GlobalStyle />
      <Desktop>
        <TabletMirror />
        <ChatBrowser />
        <Taskbar>
          <IconButton aria-label="Start" $w={18}><Windows /></IconButton>
          <TaskSearch><Search size={11} strokeWidth={2.500} /><input aria-label="Ara" placeholder="Ara" /></TaskSearch>
          <TaskApps>
            {taskApps.map(({ name, icon: Icon, state }) => (
              <TaskApp key={name} aria-label={name} $state={state}><Icon /></TaskApp>
            ))}
          </TaskApps>
          <Tray>
            <IconButton aria-label="Hidden icons"><ChevronUp size={11} /></IconButton>
            <IconButton aria-label="Microphone" $w={18} $color="#4879b8"><Mic size={12} /></IconButton>
            <IconButton aria-label="Network"><Svg size={13} box={13}><path d="M8 2H1v8h9V7M4 12h4M10.500 1v5M9 1v2.500h3V1" /></Svg></IconButton>
            <IconButton aria-label="Volume" $w={14}><Volume2 size={12} strokeWidth={1.700} /></IconButton>
            <TrayClock>14:46<br />7.10.2025</TrayClock>
          </Tray>
        </Taskbar>
      </Desktop>
    </>
  );
}

export default App;
